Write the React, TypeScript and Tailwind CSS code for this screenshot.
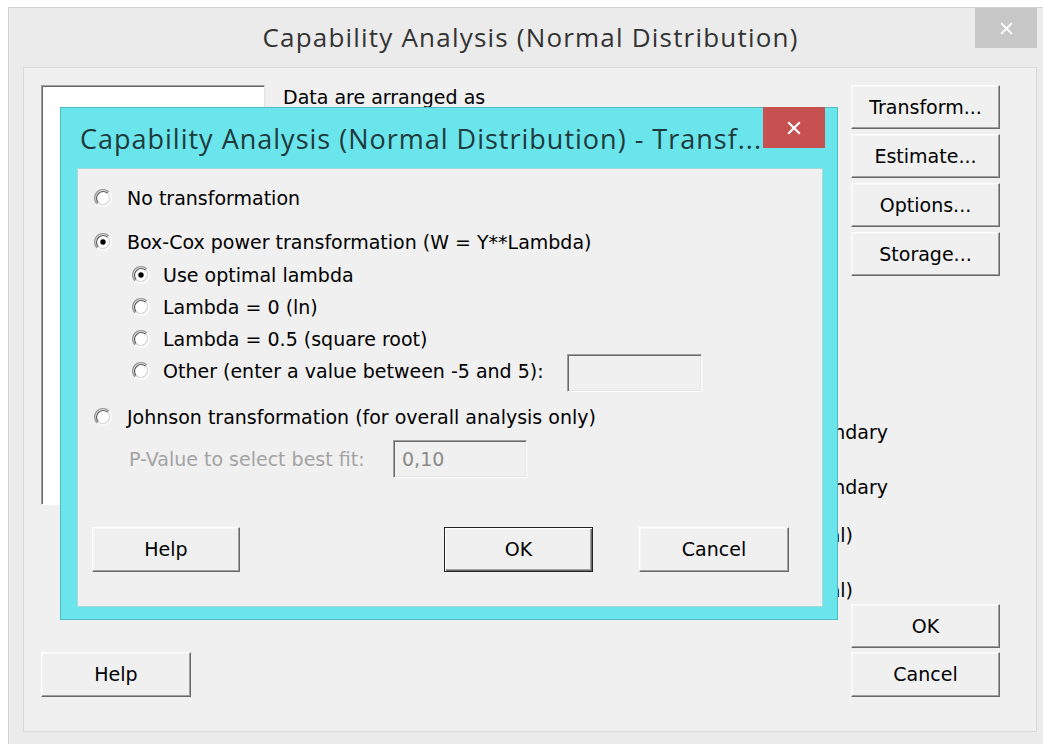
import React from "react";

// Classic 3D raised push button
function PushButton({
  children,
  className = "",
  primary = false,
}: {
  children: React.ReactNode;
  className?: string;
  primary?: boolean;
}) {
  const face = primary
    ? "border border-[#262626] shadow-[inset_1px_1px_0_#ffffff,inset_-1px_-1px_0_#6b6b6b,inset_-2px_-2px_0_#a0a0a0]"
    : "border border-t-white border-l-white border-b-[#696969] border-r-[#696969] shadow-[inset_-1px_-1px_0_#a0a0a0,inset_1px_1px_0_#f7f7f7]";
  return (
    <div
      className={`flex shrink-0 items-center justify-center bg-[#f0f0f0] text-[19px] text-black ${face} ${className}`}
    >
      {children}
    </div>
  );
}

// Sunken edit field
function Field({ className = "", children }: { className?: string; children?: React.ReactNode }) {
  return (
    <div
      className={`flex shrink-0 items-center border border-t-[#a0a0a0] border-l-[#a0a0a0] border-b-white border-r-white bg-[#f0f0f0] shadow-[inset_1px_1px_0_#696969,inset_-1px_-1px_0_#e3e3e3] ${className}`}
    >
      {children}
    </div>
  );
}

// Classic sunken radio circle
function Radio({ checked = false }: { checked?: boolean }) {
  return (
    <svg width="18" height="18" viewBox="0 0 18 18" className="shrink-0">
      <circle cx="9" cy="9" r="7.6" fill="#ffffff" />
      <path d="M3.1 14.9 A8.3 8.3 0 0 1 14.9 3.1" fill="none" stroke="#9a9a9a" strokeWidth="1.4" />
      <path d="M4.2 13.8 A6.8 6.8 0 0 1 13.8 4.2" fill="none" stroke="#5e5e5e" strokeWidth="1.2" />
      <path d="M14.9 3.1 A8.3 8.3 0 0 1 3.1 14.9" fill="none" stroke="#fafafa" strokeWidth="1.4" />
      <path d="M13.8 4.2 A6.8 6.8 0 0 1 4.2 13.8" fill="none" stroke="#d8d8d8" strokeWidth="1.2" />
      {checked && <circle cx="9" cy="9" r="2.7" fill="#000000" />}
    </svg>
  );
}

function CloseGlyph({ size = 14 }: { size?: number }) {
  return (
    <svg width={size} height={size} viewBox="0 0 14 14">
      <path d="M2 2 L12 12 M12 2 L2 12" stroke="#ffffff" strokeWidth="2.2" strokeLinecap="square" />
    </svg>
  );
}

function Option({
  label,
  checked = false,
  gap = "ml-[15px]",
}: {
  label: string;
  checked?: boolean;
  gap?: string;
}) {
  return (
    <div className="flex h-[32px] items-center">
      <Radio checked={checked} />
      <span className={`${gap} whitespace-nowrap`}>{label}</span>
    </div>
  );
}

function TransformDialog() {
  return (
    <div className="absolute left-[60px] top-[107px] flex h-[513px] w-[778px] flex-col border border-[#4fbcc2] bg-[#69e5eb]">
      {/* caption */}
      <div className="flex h-[60px] shrink-0">
        <div className="flex min-w-0 flex-1 items-center pl-[19px] pt-[2px] font-['Open_Sans',sans-serif] text-[27px] tracking-[1px] whitespace-nowrap text-[#1f3a3c]">
          Capability Analysis (Normal Distribution) - Transf...
        </div>
        <div className="mr-[12px] -mt-[1px] flex h-[41px] w-[62px] shrink-0 items-center justify-center bg-[#c75050]">
          <CloseGlyph />
        </div>
      </div>

      {/* client area */}
      <div className="ml-[16px] mr-[14px] flex h-[439px] flex-col border border-[#a9d8db] bg-[#f0f0f0] text-[19px] text-black">
        <div className="pl-[16px] pt-[13px]">
          <Option label="No transformation" />
          <div className="mt-[12px]">
            <Option label="Box-Cox power transformation (W = Y**Lambda)" checked />
          </div>
          <div className="mt-[1px] pl-[38px]">
            <Option label="Use optimal lambda" checked gap="ml-[13px]" />
            <Option label="Lambda = 0 (ln)" gap="ml-[13px]" />
            <Option label="Lambda = 0.5 (square root)" gap="ml-[13px]" />
            <div className="flex h-[32px] items-center">
              <Radio />
              <span className="ml-[13px] w-[404px] shrink-0 whitespace-nowrap">
                Other (enter a value between -5 and 5):
              </span>
              <Field className="mt-[3px] h-[38px] w-[135px]" />
            </div>
          </div>
          <div className="mt-[14px]">
            <Option label="Johnson transformation (for overall analysis only)" />
          </div>
          <div className="mt-[7px] flex h-[38px] items-center pl-[35px]">
            <span className="w-[264px] shrink-0 whitespace-nowrap text-[#a3a3a3]">
              P-Value to select best fit:
            </span>
            <Field className="h-[38px] w-[134px] pl-[8px] text-[#8a8a8a]">0,10</Field>
          </div>
        </div>

        <div className="mt-[49px] flex">
          <PushButton className="ml-[14px] h-[45px] w-[148px]">Help</PushButton>
          <PushButton primary className="ml-[204px] h-[45px] w-[149px]">
            OK
          </PushButton>
          <PushButton className="ml-[46px] h-[45px] w-[150px]">Cancel</PushButton>
        </div>
      </div>
    </div>
  );
}

// Spec row: hidden edit box on the left, check box label on the right
function SpecRow({ label, top, right }: { label: string; top: string; right: string }) {
  return (
    <div className={`${top} flex h-[28px] items-center`}>
      <Field className="ml-[170px] h-[30px] w-[150px]" />
      <span className={`ml-auto ${right} flex items-center whitespace-nowrap`}>{label}</span>
    </div>
  );
}

export default function App() {
  return (
    <div className="relative h-[744px] w-[1043px] overflow-hidden bg-white pl-[8px] pt-[7px] font-['DejaVu_Sans',sans-serif]">
      {/* main dialog window */}
      <div className="flex h-[745px] w-[1045px] flex-col border border-[#d2d2d2] bg-[#ebebeb]">
        <div className="grid h-[59px] shrink-0 grid-cols-[1fr_auto_1fr]">
          <div />
          <div className="flex items-center font-['Open_Sans',sans-serif] text-[26px] tracking-[1.2px] whitespace-nowrap text-[#333333]">
            Capability Analysis (Normal Distribution)
          </div>
          <div className="flex justify-end">
            <div className="mr-[15px] flex h-[40px] w-[62px] items-center justify-center bg-[#c7c7c7]">
              <CloseGlyph size={13} />
            </div>
          </div>
        </div>

        <div className="ml-[14px] flex h-[665px] w-[1014px] border border-[#dadada] bg-[#f0f0f0] pl-[17px] pt-[17px] text-[19px] text-black">
          {/* variable list + help */}
          <div className="flex w-[224px] shrink-0 flex-col">
            <div className="h-[420px] border border-t-[#a0a0a0] border-l-[#a0a0a0] border-b-white border-r-[#e3e3e3] bg-white shadow-[inset_1px_1px_0_#696969]" />
            <PushButton className="mt-[147px] h-[45px] w-[150px]">Help</PushButton>
          </div>

          <div className="ml-[18px] flex w-[717px] shrink-0 flex-col">
            <div className="flex h-[191px]">
              <div className="flex w-[530px] flex-col">
                <div className="h-[24px] leading-[24px] whitespace-nowrap">Data are arranged as</div>
              </div>
              <div className="ml-[38px] flex w-[149px] flex-col gap-[5px]">
                <PushButton className="h-[44px] w-[149px]">Transform...</PushButton>
                <PushButton className="h-[44px] w-[149px]">Estimate...</PushButton>
                <PushButton className="h-[44px] w-[149px]">Options...</PushButton>
                <PushButton className="h-[44px] w-[149px]">Storage...</PushButton>
              </div>
            </div>

            <SpecRow label="Boundary" top="mt-[142px]" right="mr-[112px]" />
            <SpecRow label="Boundary" top="mt-[27px]" right="mr-[112px]" />
            <SpecRow label="(optional)" top="mt-[20px]" right="mr-[147px]" />
            <SpecRow label="(optional)" top="mt-[27px]" right="mr-[147px]" />

            <div className="flex flex-col items-end gap-[4px]">
              <PushButton className="h-[44px] w-[149px]">OK</PushButton>
              <PushButton className="h-[45px] w-[149px]">Cancel</PushButton>
            </div>
          </div>
        </div>
      </div>

      <TransformDialog />
    </div>
  );
}
